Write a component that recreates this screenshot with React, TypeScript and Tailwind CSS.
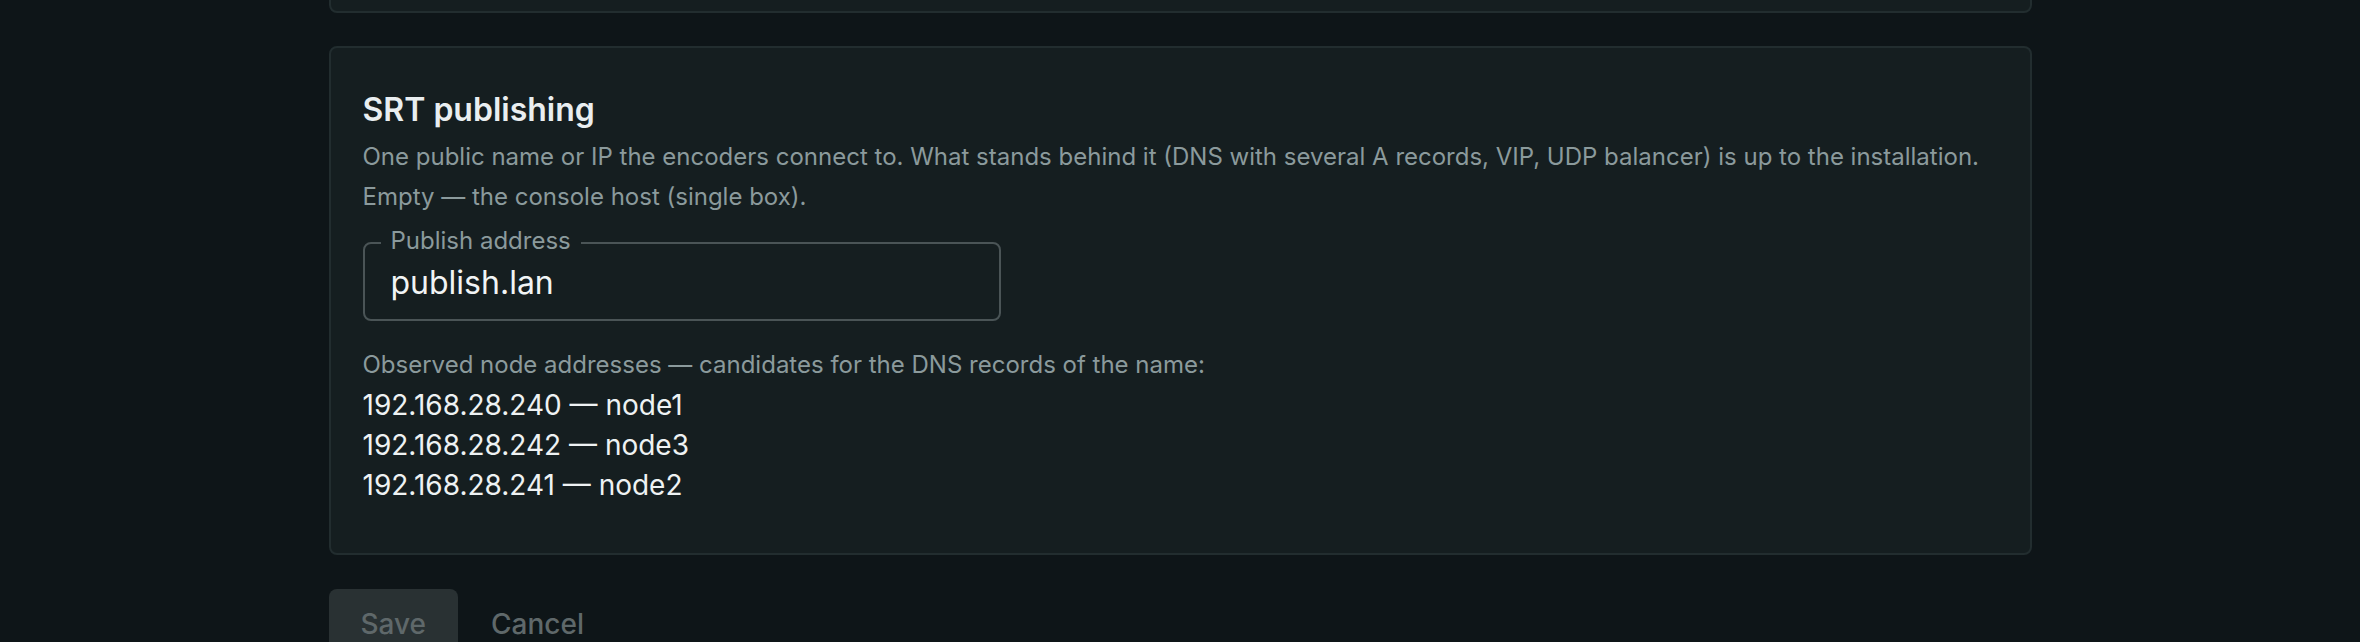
export default function App() {
  const nodes = [
    { ip: "192.168.28.240", name: "node1" },
    { ip: "192.168.28.242", name: "node3" },
    { ip: "192.168.28.241", name: "node2" },
  ]

  return (
    <div className="h-[642px] overflow-hidden bg-[#0e1518] font-['Inter',sans-serif]">
      <div className="mx-auto w-[1703px] -mt-[40px]">
        <div className="h-[53px] rounded-lg border-2 border-[#222d2f] bg-[#151e20]" />

        <section className="mt-[33px] rounded-lg border-2 border-[#222d2f] bg-[#151e20] px-[32px] pt-[42px] pb-[48px]">
          <h2 className="text-[32px] font-semibold leading-[40px] text-[#e9eef0]">SRT publishing</h2>
          <p className="mt-[7px] text-[24px] leading-[40px] text-[#8b9a9c]">
            One public name or IP the encoders connect to. What stands behind it (DNS with several A records, VIP, UDP
            balancer) is up to the installation.
            <br />
            Empty — the console host (single box).
          </p>

          <fieldset className="mt-[11px] w-[638px] rounded-lg border-2 border-[#4a5456] px-[26px] pt-[6px] pb-[16px]">
            <legend className="ml-[-10px] px-[10px] text-[24px] leading-[29px] text-[#8b9a9c]">
              <span className="relative top-[-2px]">Publish address</span>
            </legend>
            <div className="text-[32px] leading-[40px] text-[#f1f4f5]">publish.lan</div>
          </fieldset>

          <p className="mt-[24px] text-[24px] leading-[40px] text-[#8b9a9c]">
            Observed node addresses — candidates for the DNS records of the name:
          </p>
          <ul>
            {nodes.map((n) => (
              <li key={n.ip} className="text-[28px] leading-[40px] text-[#eef2f3]">
                {n.ip} — {n.name}
              </li>
            ))}
          </ul>
        </section>

        <div className="mt-[34px] flex items-center gap-[6px]">
          <button className="h-[70px] rounded-lg bg-[#293133] px-[32px] text-[28px] font-medium text-[#5f686a]">
            Save
          </button>
          <button className="h-[70px] px-[27px] text-[28px] font-medium text-[#5f686a]">Cancel</button>
        </div>
      </div>
    </div>
  )
}
